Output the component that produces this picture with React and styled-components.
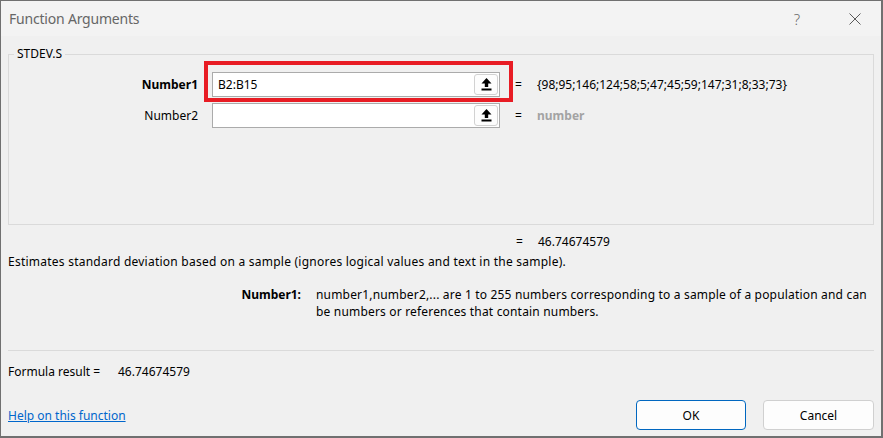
import React from "react";
import styled, { createGlobalStyle } from "styled-components";

const Global = createGlobalStyle`
  html, body { margin: 0; padding: 0; background: #f0f0f0; }
  body { font-family: "Noto Sans", "Open Sans", sans-serif; font-size: 12px; color: #000; }
  * { box-sizing: border-box; }
`;

const Window = styled.div`
  width: 883px;
  height: 438px;
  border: 1px solid #707070;
  border-right-width: 2px;
  border-bottom-width: 2px;
  background: #f0f0f0;
  display: flex;
  flex-direction: column;
  overflow: hidden;
`;

const TitleBar = styled.div`
  height: 35px;
  flex: none;
  background: #f3f3f3;
  display: flex;
  align-items: center;
  padding-left: 8px;
`;

const Title = styled.div`
  font-size: 14px;
  color: #666;
  flex: 1;
  letter-spacing: -0.2px;
`;

const TitleBtn = styled.div`
  width: 40px;
  height: 35px;
  display: flex;
  align-items: center;
  justify-content: center;
  color: #6a6a6a;
  font-size: 15px;
  font-weight: 300;
  margin-right: ${(p) => p.$mr || 0}px;
`;

const Body = styled.div`
  flex: 1;
  display: flex;
  flex-direction: column;
  padding: 0 6px 0 7px;
`;

const Group = styled.fieldset`
  margin: 10px 1px 0 0;
  padding: 0;
  border: 1px solid #dadada;
  min-width: 0;
`;

const Legend = styled.legend`
  margin-left: 5px;
  padding: 0 3px;
  line-height: 16px;
  font-size: 12px;
`;

const GroupContent = styled.div`
  height: 162px;
  padding-top: 10px;
  display: flex;
  flex-direction: column;
  gap: 6px;
`;

const ArgRow = styled.div`
  display: flex;
  align-items: center;
  height: 25px;
`;

const ArgLabel = styled.div`
  width: 189px;
  margin-right: 14px;
  text-align: right;
  font-weight: ${(p) => (p.$bold ? 700 : 400)};
`;

const InputWrap = styled.div`
  position: relative;
  width: 288px;
  height: 25px;
`;

const InputBox = styled.div`
  width: 100%;
  height: 100%;
  background: #fff;
  border: 1px solid #ababab;
  display: flex;
  align-items: center;
  padding: 0 1px 0 5px;
`;

const InputText = styled.div`
  flex: 1;
  font-size: 12px;
  color: #000;
`;

const RefButton = styled.div`
  width: 24px;
  height: 21px;
  border: 1px solid #d2d2d2;
  border-radius: 3px;
  background: #fdfdfd;
  display: flex;
  align-items: center;
  justify-content: center;
`;

const Highlight = styled.div`
  position: absolute;
  top: -11px;
  left: -8px;
  right: -13px;
  bottom: -5px;
  border: 4px solid #e81c24;
  pointer-events: none;
`;

const Eq = styled.div`
  width: 22px;
  margin-left: ${(p) => (p.$ml != null ? p.$ml : 15)}px;
  flex: none;
`;

const Value = styled.div`
  color: ${(p) => (p.$muted ? "#a3a3a3" : "#000")};
  font-weight: ${(p) => (p.$muted ? 700 : 400)};
  white-space: nowrap;
`;

const ResultRow = styled.div`
  display: flex;
  align-items: center;
  height: 16px;
  margin-top: 8px;
  padding-left: 508px;
`;

const Description = styled.div`
  line-height: 16px;
  margin-top: 5px;
  white-space: nowrap;
  letter-spacing: 0.24px;
`;

const HelpRow = styled.div`
  display: flex;
  margin-top: 16px;
  line-height: 17px;
`;

const HelpLabel = styled.div`
  width: 293px;
  margin-right: 15px;
  text-align: right;
  font-weight: 700;
  flex: none;
`;

const HelpText = styled.div`
  white-space: nowrap;
  letter-spacing: 0.18px;
`;

const Separator = styled.div`
  height: 1px;
  background: #dadada;
  margin-top: 30px;
  margin-right: 1px;
`;

const FormulaRow = styled.div`
  display: flex;
  line-height: 16px;
  margin-top: 13px;
`;

const FormulaLabel = styled.span`
  width: 110px;
  flex: none;
`;

const Footer = styled.div`
  display: flex;
  align-items: center;
  margin-top: 20px;
  padding-right: 1px;
  height: 30px;
`;

const HelpLink = styled.a`
  color: #0066cc;
  text-decoration: underline;
  flex: 1;
  cursor: pointer;
`;

const Button = styled.button`
  width: ${(p) => p.$w || 110}px;
  height: 30px;
  margin-left: ${(p) => p.$ml || 0}px;
  border-radius: 4px;
  border: 1px solid ${(p) => (p.$primary ? "#0067c0" : "#d0d0d0")};
  background: #fdfdfd;
  font-family: inherit;
  font-size: 12px;
  color: #000;
  padding: 0;
`;

const UploadIcon = () => (
  <svg width="11" height="13" viewBox="0 0 11 13">
    <path d="M5.5 0 L0.5 5.5 H3.8 V9 H7.2 V5.5 H10.5 Z" fill="#000" />
    <rect x="0.5" y="10.5" width="10" height="2" fill="#000" />
  </svg>
);

const CloseIcon = () => (
  <svg width="12" height="12" viewBox="0 0 12 12">
    <path d="M0.5 0.5 L11.5 11.5 M11.5 0.5 L0.5 11.5" stroke="#5a5a5a" strokeWidth="1" />
  </svg>
);

export default function App() {
  return (
    <>
      <Global />
      <Window>
        <TitleBar>
          <Title>Function Arguments</Title>
          <TitleBtn $mr={18}>?</TitleBtn>
          <TitleBtn $mr={6}>
            <CloseIcon />
          </TitleBtn>
        </TitleBar>
        <Body>
          <Group>
            <Legend>STDEV.S</Legend>
            <GroupContent>
              <ArgRow>
                <ArgLabel $bold>Number1</ArgLabel>
                <InputWrap>
                  <InputBox>
                    <InputText>B2:B15</InputText>
                    <RefButton>
                      <UploadIcon />
                    </RefButton>
                  </InputBox>
                  <Highlight />
                </InputWrap>
                <Eq>=</Eq>
                <Value>{"{98;95;146;124;58;5;47;45;59;147;31;8;33;73}"}</Value>
              </ArgRow>
              <ArgRow>
                <ArgLabel>Number2</ArgLabel>
                <InputWrap>
                  <InputBox>
                    <InputText />
                    <RefButton>
                      <UploadIcon />
                    </RefButton>
                  </InputBox>
                </InputWrap>
                <Eq>=</Eq>
                <Value $muted>number</Value>
              </ArgRow>
            </GroupContent>
          </Group>
          <ResultRow>
            <Eq $ml={0}>=</Eq>
            <Value>46.74674579</Value>
          </ResultRow>
          <Description>
            Estimates standard deviation based on a sample (ignores logical values and text in the sample).
          </Description>
          <HelpRow>
            <HelpLabel>Number1:</HelpLabel>
            <HelpText>
              number1,number2,... are 1 to 255 numbers corresponding to a sample of a population and can
              <br />
              be numbers or references that contain numbers.
            </HelpText>
          </HelpRow>
          <Separator />
          <FormulaRow>
            <FormulaLabel>Formula result =</FormulaLabel>
            <span>46.74674579</span>
          </FormulaRow>
          <Footer>
            <HelpLink>Help on this function</HelpLink>
            <Button $primary>OK</Button>
            <Button $ml={17} $w={111}>Cancel</Button>
          </Footer>
        </Body>
      </Window>
    </>
  );
}
